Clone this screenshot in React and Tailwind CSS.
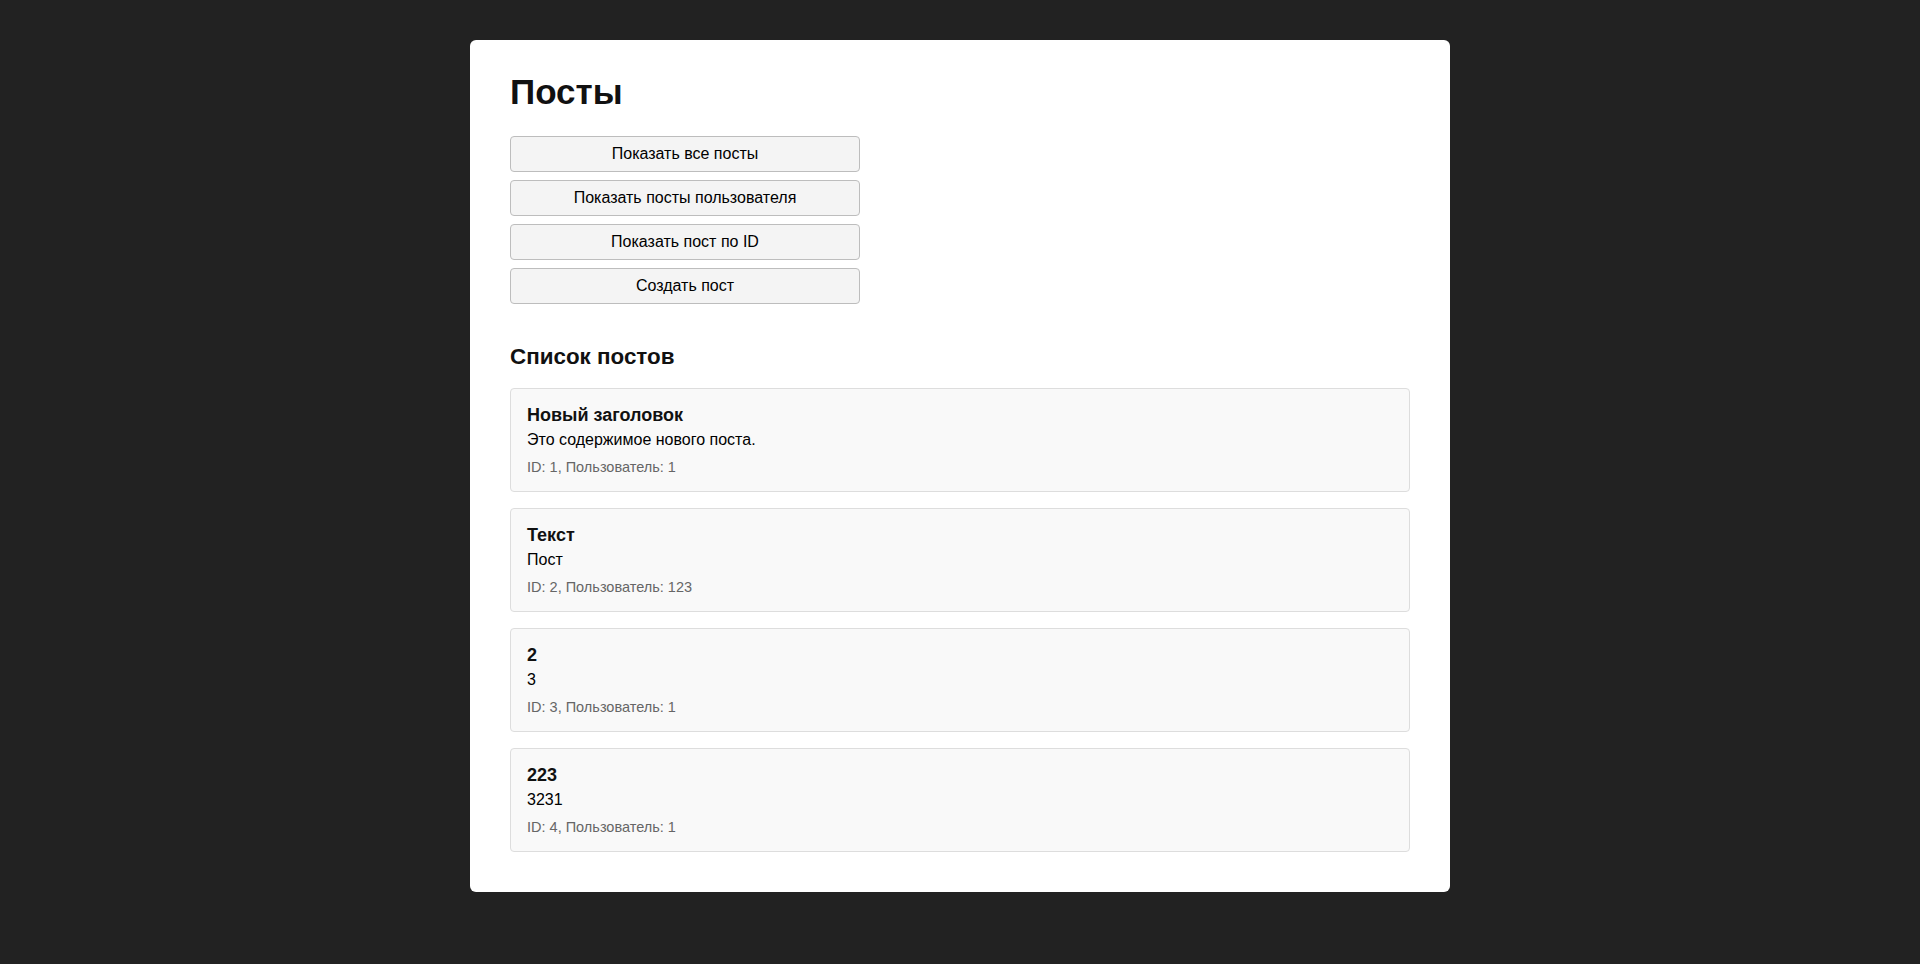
import React from 'react';

const posts = [
  { id: 1, title: 'Новый заголовок', body: 'Это содержимое нового поста.', userId: 1 },
  { id: 2, title: 'Текст', body: 'Пост', userId: 123 },
  { id: 3, title: '2', body: '3', userId: 1 },
  { id: 4, title: '223', body: '3231', userId: 1 },
];

const actions = [
  'Показать все посты',
  'Показать посты пользователя',
  'Показать пост по ID',
  'Создать пост',
];

export default function App() {
  return (
    <div
      className="min-h-screen bg-[#222222] pt-10 pb-10"
      style={{ fontFamily: '"Liberation Sans", Arial, sans-serif' }}
    >
      <div className="mx-auto w-[980px] rounded-md bg-white px-10 pt-8 pb-10 text-black">
        <h1 className="mb-6 text-[35px] font-bold leading-[normal] text-[#111]">Посты</h1>

        {/* кнопки */}
        <div className="flex w-[350px] flex-col gap-2">
          {actions.map((label) => (
            <button
              key={label}
              className="h-9 rounded border border-[#bdbdbd] bg-[#f4f4f4] text-base leading-[normal] text-black"
            >
              {label}
            </button>
          ))}
        </div>

        <h2 className="mt-10 mb-[18px] text-[22.4px] font-bold leading-[normal] text-[#111]">
          Список постов
        </h2>

        <div className="flex flex-col gap-4">
          {posts.map((post) => (
            <div
              key={post.id}
              className="rounded border border-[#dddddd] bg-[#f9f9f9] p-4"
            >
              <h3 className="mb-[5px] text-lg font-bold leading-[normal] text-[#111]">{post.title}</h3>
              <p className="text-base leading-[normal]">{post.body}</p>
              <div className="mt-2.5 text-[14.5px] leading-[normal] text-[#666]">
                ID: {post.id}, Пользователь: {post.userId}
              </div>
            </div>
          ))}
        </div>
      </div>
    </div>
  );
}
